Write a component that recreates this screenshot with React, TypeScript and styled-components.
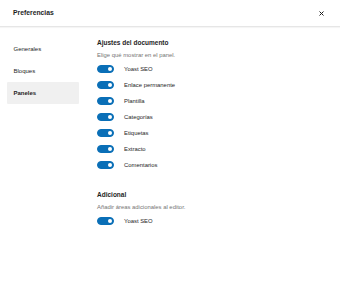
import React, { useState } from "react";
import styled, { createGlobalStyle } from "styled-components";

const GlobalStyle = createGlobalStyle`
  html, body {
    margin: 0;
    padding: 0;
    background: #fff;
  }
  body {
    font-family: "Liberation Sans", Arial, sans-serif;
    color: #1e1e1e;
  }
`;

const Modal = styled.div`
  width: 340px;
  height: 300px;
  background: #fff;
  display: flex;
  flex-direction: column;
  overflow: hidden;
`;

const Header = styled.div`
  height: 26px;
  flex-shrink: 0;
  display: flex;
  align-items: center;
  justify-content: space-between;
  padding: 0 16px 0 13px;
  border-bottom: 1px solid #e6e6e6;
  box-shadow: 0 1px 1px rgba(0, 0, 0, 0.04);
`;

const Title = styled.h1`
  margin: 0;
  font-size: 6.8px;
  font-weight: 700;
  line-height: 1;
`;

const Close = styled.button`
  border: none;
  background: none;
  padding: 0;
  width: 5px;
  height: 5px;
  display: flex;
  align-items: center;
  justify-content: center;
  cursor: pointer;
`;

const Body = styled.div`
  flex: 1;
  display: flex;
`;

const Sidebar = styled.nav`
  width: 80px;
  flex-shrink: 0;
  box-sizing: border-box;
  padding: 11px 0 0 7px;
  display: flex;
  flex-direction: column;
`;

const Tab = styled.button<{ $active?: boolean }>`
  width: 72px;
  height: 22px;
  border: none;
  border-radius: 1px;
  background: ${(p) => (p.$active ? "#f0f0f0" : "transparent")};
  font-family: inherit;
  font-size: 6px;
  font-weight: ${(p) => (p.$active ? 600 : 400)};
  color: #1e1e1e;
  text-align: left;
  padding: 0 0 0 6.5px;
  cursor: pointer;
`;

const Content = styled.div`
  flex: 1;
  padding: 12px 0 0 17px;
`;

const Section = styled.section`
  & + & {
    margin-top: 18px;
  }
`;

const SectionTitle = styled.h2`
  margin: 0;
  font-size: 6.5px;
  font-weight: 700;
  line-height: 8px;
`;

const Description = styled.p`
  margin: 4.5px 0 2.5px;
  font-size: 5.9px;
  line-height: 7px;
  color: #757575;
`;

const Row = styled.label`
  height: 16px;
  display: flex;
  align-items: center;
  gap: 10px;
  font-size: 5.9px;
  color: #1e1e1e;
  cursor: pointer;
`;

const Track = styled.span<{ $on: boolean }>`
  width: 17px;
  height: 8px;
  border-radius: 4px;
  box-sizing: border-box;
  background: ${(p) => (p.$on ? "#0a6fb7" : "#fff")};
  border: 1px solid ${(p) => (p.$on ? "#0a6fb7" : "#1e1e1e")};
  display: flex;
  align-items: center;
  justify-content: ${(p) => (p.$on ? "flex-end" : "flex-start")};
  padding: 0 0.8px;
`;

const Thumb = styled.span<{ $on: boolean }>`
  width: 4.6px;
  height: 4.6px;
  border-radius: 50%;
  background: ${(p) => (p.$on ? "#fff" : "#1e1e1e")};
`;

const Toggle = ({ label }: { label: string }) => {
  const [on, setOn] = useState(true);
  return (
    <Row onClick={() => setOn(!on)}>
      <Track $on={on}>
        <Thumb $on={on} />
      </Track>
      {label}
    </Row>
  );
};

const tabs = ["Generales", "Bloques", "Paneles"];
const panels = [
  "Yoast SEO",
  "Enlace permanente",
  "Plantilla",
  "Categorías",
  "Etiquetas",
  "Extracto",
  "Comentarios",
];

const App = () => {
  const [tab, setTab] = useState("Paneles");

  return (
    <Modal>
      <GlobalStyle />
      <Header>
        <Title>Preferencias</Title>
        <Close aria-label="Cerrar">
          <svg width="5" height="5" viewBox="0 0 10 10">
            <path d="M1 1L9 9M9 1L1 9" stroke="#1e1e1e" strokeWidth="2" />
          </svg>
        </Close>
      </Header>
      <Body>
        <Sidebar>
          {tabs.map((t) => (
            <Tab key={t} $active={t === tab} onClick={() => setTab(t)}>
              {t}
            </Tab>
          ))}
        </Sidebar>
        <Content>
          <Section>
            <SectionTitle>Ajustes del documento</SectionTitle>
            <Description>Elige qué mostrar en el panel.</Description>
            {panels.map((p) => (
              <Toggle key={p} label={p} />
            ))}
          </Section>
          <Section>
            <SectionTitle>Adicional</SectionTitle>
            <Description>Añadir áreas adicionales al editor.</Description>
            <Toggle label="Yoast SEO" />
          </Section>
        </Content>
      </Body>
    </Modal>
  );
};

export default App;
